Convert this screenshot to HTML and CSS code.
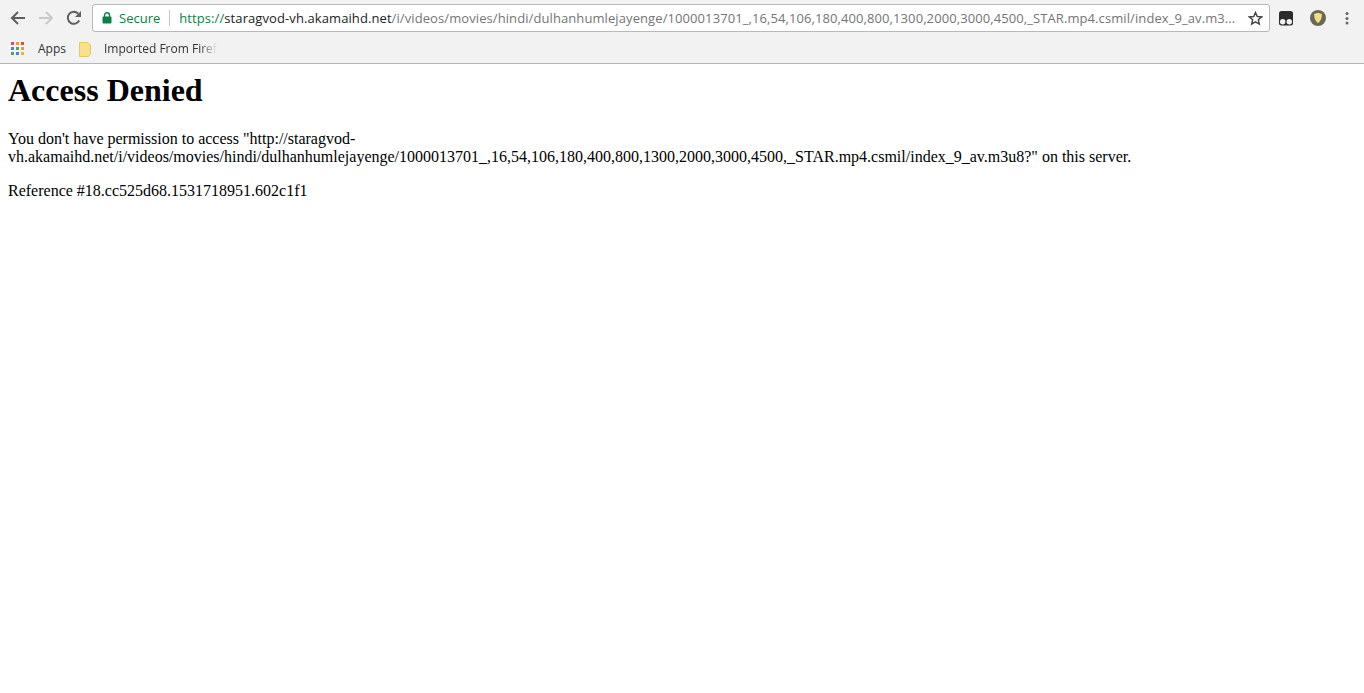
FILE: index.html
```html
<!DOCTYPE html>
<html lang="en">
<head>
<meta charset="utf-8">
<title>Access Denied</title>
<link rel="stylesheet" href="styles.css">
</head>
<body>
<header class="chrome">
  <div class="toolbar">
    <svg class="nav-icon" width="16" height="16" viewBox="0 0 16 16"><path d="M15 8H2M8 2L2 8l6 6" fill="none" stroke="#5f5f5f" stroke-width="2"/></svg>
    <svg class="nav-icon" width="16" height="16" viewBox="0 0 16 16"><path d="M1 8H14M8 2l6 6-6 6" fill="none" stroke="#c9c9c9" stroke-width="2"/></svg>
    <svg class="nav-icon" width="16" height="16" viewBox="0 0 16 16"><path d="M13.2 10.500A6 6 0 1 1 12.200 3.700" fill="none" stroke="#5f5f5f" stroke-width="2"/><path d="M15 1v6H9z" fill="#5f5f5f"/></svg>
    <div class="omnibox">
      <svg class="lock" width="10" height="12" viewBox="0 0 10 12"><path d="M2.500 5V3.300a2.500 2.500 0 0 1 5 0V5" fill="none" stroke="#0b8043" stroke-width="1.400"/><rect x="0.500" y="4.500" width="9" height="7" rx="1" fill="#0b8043"/></svg>
      <span class="secure">Secure</span>
      <span class="divider"></span>
      <span class="url"><span class="scheme">https://</span><span class="host">staragvod-vh.akamaihd.net</span>/i/videos/movies/hindi/dulhanhumlejayenge/1000013701_,16,54,106,180,400,800,1300,2000,3000,4500,_STAR.mp4.csmil/index_9_av.m3...</span>
      <svg class="star" width="15" height="15" viewBox="0 0 16 16"><path d="M8 1.600l1.900 4.300 4.600.4-3.500 3 1.100 4.600L8 11.500l-4.100 2.400L5 9.300l-3.500-3 4.600-.4z" fill="none" stroke="#444" stroke-width="1.500"/></svg>
    </div>
    <svg class="ext-mask" width="16" height="16" viewBox="0 0 16 16"><rect x="1" y="1" width="14" height="14.500" rx="2.500" fill="#2b2b2b"/><circle cx="4.700" cy="11.700" r="2.700" fill="#f4f4f4"/><circle cx="11.300" cy="11.700" r="2.700" fill="#f4f4f4"/></svg>
    <svg class="ext-shield" width="16" height="16" viewBox="0 0 16 16"><circle cx="8" cy="8" r="8" fill="#6b6756"/><path d="M8 2.800l3.900 1.300c0 4-1 7-3.900 9.100-2.900-2.100-3.900-5.100-3.900-9.100z" fill="#f1de84"/></svg>
    <svg class="menu" width="4" height="14" viewBox="0 0 4 14"><circle cx="2" cy="2.500" r="1.500" fill="#666"/><circle cx="2" cy="7.500" r="1.500" fill="#666"/><circle cx="2" cy="12" r="1.500" fill="#666"/></svg>
  </div>
  <div class="bookmarks">
    <svg class="apps" width="14" height="14" viewBox="0 0 14 14">
      <rect x="0" y="0" width="3" height="3" fill="#c9574e"/><rect x="5" y="0" width="3" height="3" fill="#d9a04a"/><rect x="10" y="0" width="3" height="3" fill="#c9574e"/>
      <rect x="0" y="5" width="3" height="3" fill="#5284c9"/><rect x="5" y="5" width="3" height="3" fill="#5a9c68"/><rect x="10" y="5" width="3" height="3" fill="#d9a04a"/>
      <rect x="0" y="10" width="3" height="3" fill="#5a9c68"/><rect x="5" y="10" width="3" height="3" fill="#5284c9"/><rect x="10" y="10" width="3" height="3" fill="#dcb64e"/>
    </svg>
    <span class="bm-label">Apps</span>
    <svg class="folder" width="12" height="15" viewBox="0 0 12 15"><path d="M.5.500h8.500l2.500 2.500v9l-2 2.500h-9z" fill="#fbe08c" stroke="#e8c765"/></svg>
    <span class="bm-label bm-fade">Imported From Firef</span>
  </div>
</header>
<main>
  <h1>Access Denied</h1>
  <p class="msg">You don't have permission to access "http://staragvod-vh.akamaihd.net/i/videos/movies/hindi/dulhanhumlejayenge/1000013701_,16,54,106,180,400,800,1300,2000,3000,4500,_STAR.mp4.csmil/index_9_av.m3u8?" on this server.</p>
  <p class="msg">Reference #18.cc525d68.1531718951.602c1f1</p>
</main>
</body>
</html>
```
FILE: styles.css
```css
* { box-sizing: border-box; }
html, body { margin: 0; background: #fff; }
body { font-family: "Liberation Serif", "Times New Roman", serif; color: #000; overflow: hidden; height: 693px; }
.chrome { height: 64px; background: #f2f2f2; border-bottom: 1px solid #b5b5b5; font-family: "Open Sans", "Noto Sans", sans-serif; }
.toolbar { height: 36px; display: flex; align-items: center; padding-left: 10px; }
.nav-icon { margin-right: 12px; flex: none; }
.omnibox { flex: none; width: 1178px; height: 28px; margin-left: -2px; background: #fff; border: 1px solid #b9b9b9; border-radius: 3px; display: flex; align-items: center; padding: 0 6px 0 9px; font-size: 13px; white-space: nowrap; }
.lock { flex: none; margin-right: 7px; }
.secure { color: #0b8043; }
.divider { width: 1px; height: 16px; background: #c4c4c4; margin: 0 9px; flex: none; }
.url { color: #757575; flex: 1; overflow: hidden; letter-spacing: 0.09px; }
.scheme { color: #0b8043; }
.host { color: #222; }
.star { flex: none; margin-left: 5px; }
.ext-mask { flex: none; margin-left: 8px; }
.ext-shield { flex: none; margin-left: 16px; }
.menu { flex: none; margin-left: 19px; }
.bookmarks { height: 27px; display: flex; align-items: center; padding-left: 11px; font-size: 12px; color: #333; padding-bottom: 3px; }
.apps { flex: none; margin-right: 13px; margin-top: 2px; }
.bm-label { white-space: nowrap; }
.folder { flex: none; margin-left: 13px; margin-right: 13px; margin-top: 2px; }
.bm-fade { -webkit-mask-image: linear-gradient(to right, #000 85%, transparent); mask-image: linear-gradient(to right, #000 85%, transparent); }
main { padding: 0 8px; }
h1 { font-size: 32px; font-weight: bold; line-height: 37px; margin: 8px 0 0; }
.msg { font-size: 16px; line-height: 18px; margin: 0; }
h1 + .msg { margin-top: 21px; }
.msg + .msg { margin-top: 16px; }
```
